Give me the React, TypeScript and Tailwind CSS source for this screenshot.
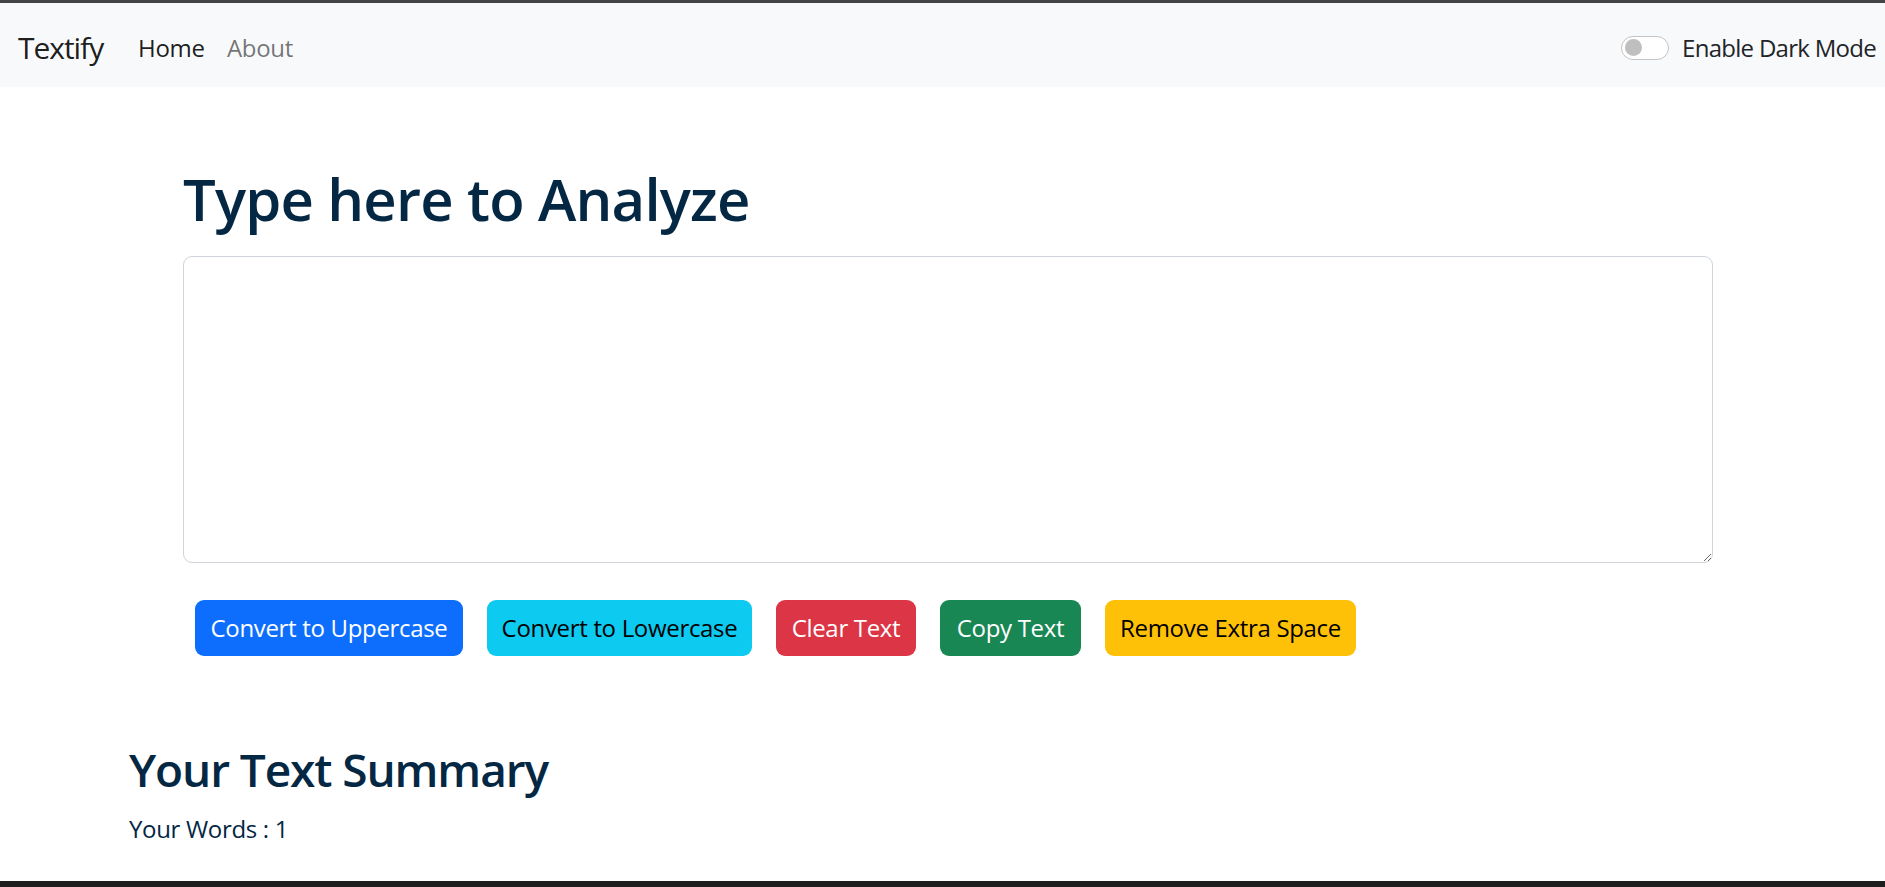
export default function App() {
  const buttons = [
    { label: "Convert to Uppercase", cls: "w-[268px] bg-[#0d6efd] text-white" },
    { label: "Convert to Lowercase", cls: "w-[265px] bg-[#0dcaf0] text-black" },
    { label: "Clear Text", cls: "w-[140px] bg-[#dc3545] text-white" },
    { label: "Copy Text", cls: "w-[141px] bg-[#198754] text-white" },
    { label: "Remove Extra Space", cls: "w-[251px] bg-[#ffc107] text-black" },
  ];

  return (
    <div className="flex h-[887px] flex-col bg-white font-['Open_Sans',sans-serif] tracking-[-0.02em]">
      <div className="h-[3px] bg-[#444444]"></div>

      <nav className="flex h-[84px] items-center bg-[#f8f9fa] pl-[18px] pr-[9px] pt-[5px]">
        <a className="w-[120px] text-[30px] leading-[45px] tracking-[-0.035em] text-black/90">Textify</a>
        <a className="w-[89px] text-[24px] leading-[36px] text-black/90">Home</a>
        <a className="text-[24px] leading-[36px] text-black/55">About</a>

        <div className="ml-auto flex items-center">
          <div className="flex h-[24px] w-[48px] items-center rounded-full border border-[#c4c4c4] bg-white pl-[3px]">
            <div className="h-[17px] w-[17px] rounded-full bg-[#bfbfbf]"></div>
          </div>
          <label className="ml-[13px] whitespace-nowrap text-[24px] leading-[36px] tracking-[-0.03em] text-[#212529]">
            Enable Dark Mode
          </label>
        </div>
      </nav>

      <main className="pl-[183px]">
        <h1 className="mt-[76px] text-[58px] font-semibold leading-[72px] tracking-[-0.014em] text-[#042743]">
          Type here to Analyze
        </h1>
        <textarea
          className="mt-[21px] block h-[307px] w-[1530px] rounded-[9px] border border-[#ced4da] bg-white outline-none"
          style={{ resize: "vertical" }}
        ></textarea>

        <div className="mt-[37px] flex gap-[24px] pl-[12px]">
          {buttons.map((b, i) => (
            <button
              key={i}
              className={`h-[56px] whitespace-nowrap rounded-[9px] text-[24px] leading-[36px] ${b.cls}`}
            >
              {b.label}
            </button>
          ))}
        </div>
      </main>

      <section className="pl-[129px] text-[#042743]">
        <h2 className="mt-[85px] text-[46px] font-semibold leading-[57px] tracking-[-0.024em]">Your Text Summary</h2>
        <p className="mt-[13px] text-[24px] leading-[36px]">Your Words : 1</p>
      </section>

      <div className="flex-1"></div>
      <div className="h-[6px] bg-[#1e1e1e]"></div>
    </div>
  );
}
